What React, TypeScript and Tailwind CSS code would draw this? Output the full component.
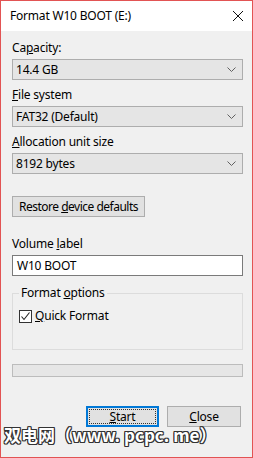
import React from "react"

const font = { fontFamily: '"Noto Sans", "Open Sans", sans-serif' }

function Chevron() {
  return (
    <svg width="9" height="5" viewBox="0 0 9 5" className="mr-[6px]">
      <path d="M0.5 0.5 L4.5 4.5 L8.5 0.5" fill="none" stroke="#606060" strokeWidth="1" />
    </svg>
  )
}

function Combo({ value }: { value: string }) {
  return (
    <div className="flex h-[21px] w-[231px] items-center justify-between border border-[#adadad] bg-[#e5e5e5] pl-[3px]">
      <span className="text-[12px] leading-[16px] text-black">{value}</span>
      <Chevron />
    </div>
  )
}

function Label({ children }: { children: React.ReactNode }) {
  return <div className="mb-[3px] h-[16px] text-[12px] leading-[16px] text-black">{children}</div>
}

export default function App() {
  return (
    <div
      className="relative flex h-[458px] w-[253px] flex-col overflow-hidden border border-[#e25353] bg-[#f0f0f0] tracking-[-0.2px] text-black"
      style={font}
    >
      {/* title bar */}
      <div className="flex h-[30px] items-center justify-between bg-white pl-[9px] pr-[9px]">
        <span className="text-[12px] leading-[16px]">Format W10 BOOT (E:)</span>
        <svg width="10" height="10" viewBox="0 0 10 10">
          <path d="M0 0 L10 10 M10 0 L0 10" stroke="#111" strokeWidth="1" />
        </svg>
      </div>

      <div className="flex flex-col pl-[11px] pt-[9px]">
        <Label>
          Ca<u>p</u>acity:
        </Label>
        <Combo value="14.4 GB" />

        <div className="mt-[7px]">
          <Label>
            <u>F</u>ile system
          </Label>
        </div>
        <Combo value="FAT32 (Default)" />

        <div className="mt-[7px]">
          <Label>
            <u>A</u>llocation unit size
          </Label>
        </div>
        <Combo value="8192 bytes" />

        <button className="mt-[22px] flex h-[21px] w-[133px] items-center justify-center border border-[#adadad] bg-[#e1e1e1] text-[12px] leading-[16px] tracking-[-0.5px]">
          <span>
            Restore <u>d</u>evice defaults
          </span>
        </button>

        <div className="mt-[19px]">
          <Label>
            Volume <u>l</u>abel
          </Label>
        </div>
        <div className="flex h-[21px] w-[231px] items-center border border-[#7a7a7a] bg-white pl-[4px] text-[12px] leading-[16px]">
          W10 BOOT
        </div>

        <div className="relative mt-[17px] h-[57px] w-[231px] border border-[#dcdcdc]">
          <span className="absolute left-[6px] top-[-9px] bg-[#f0f0f0] px-[2px] text-[12px] leading-[16px]">
            Format <u>o</u>ptions
          </span>
          <div className="ml-[6px] mt-[14px] flex items-center gap-[3px]">
            <div className="flex h-[13px] w-[13px] items-center justify-center border border-[#333] bg-white">
              <svg width="11" height="11" viewBox="0 0 11 11">
                <path d="M1.5 5.5 L4 8.5 L9.5 1.5" fill="none" stroke="#222" strokeWidth="1.1" />
              </svg>
            </div>
            <span className="text-[12px] leading-[16px]">
              <u>Q</u>uick Format
            </span>
          </div>
        </div>

        <div className="mt-[14px] h-[13px] w-[231px] border border-[#bcbcbc] bg-[#e6e6e6]" />

        <div className="mt-[29px] flex gap-[8px] pl-[74px]">
          <button className="flex h-[21px] w-[73px] items-center justify-center border-2 border-[#0078d7] bg-[#e1e1e1] text-[12px] leading-[16px]">
            <span className="flex h-[15px] w-[67px] items-center justify-center border border-dotted border-[#333]">
              <span>
                <u>S</u>tart
              </span>
            </span>
          </button>
          <button className="flex h-[21px] w-[74px] items-center justify-center border border-[#adadad] bg-[#e1e1e1] text-[12px] leading-[16px]">
            <span>
              <u>C</u>lose
            </span>
          </button>
        </div>
      </div>

      {/* watermark */}
      <div
        className="absolute left-[3px] top-[424px] whitespace-nowrap text-[17px] font-bold leading-[20px] tracking-normal text-white"
        style={{
          fontFamily: '"Noto Sans CJK SC", "DejaVu Sans", sans-serif',
          textShadow:
            "1px 0 0 #333, -1px 0 0 #333, 0 1px 0 #333, 0 -1px 0 #333, 1px 1px 0 #333, -1px -1px 0 #333, 1px -1px 0 #333, -1px 1px 0 #333",
        }}
      >
        双电网（www. pcpc. me）
      </div>
    </div>
  )
}
